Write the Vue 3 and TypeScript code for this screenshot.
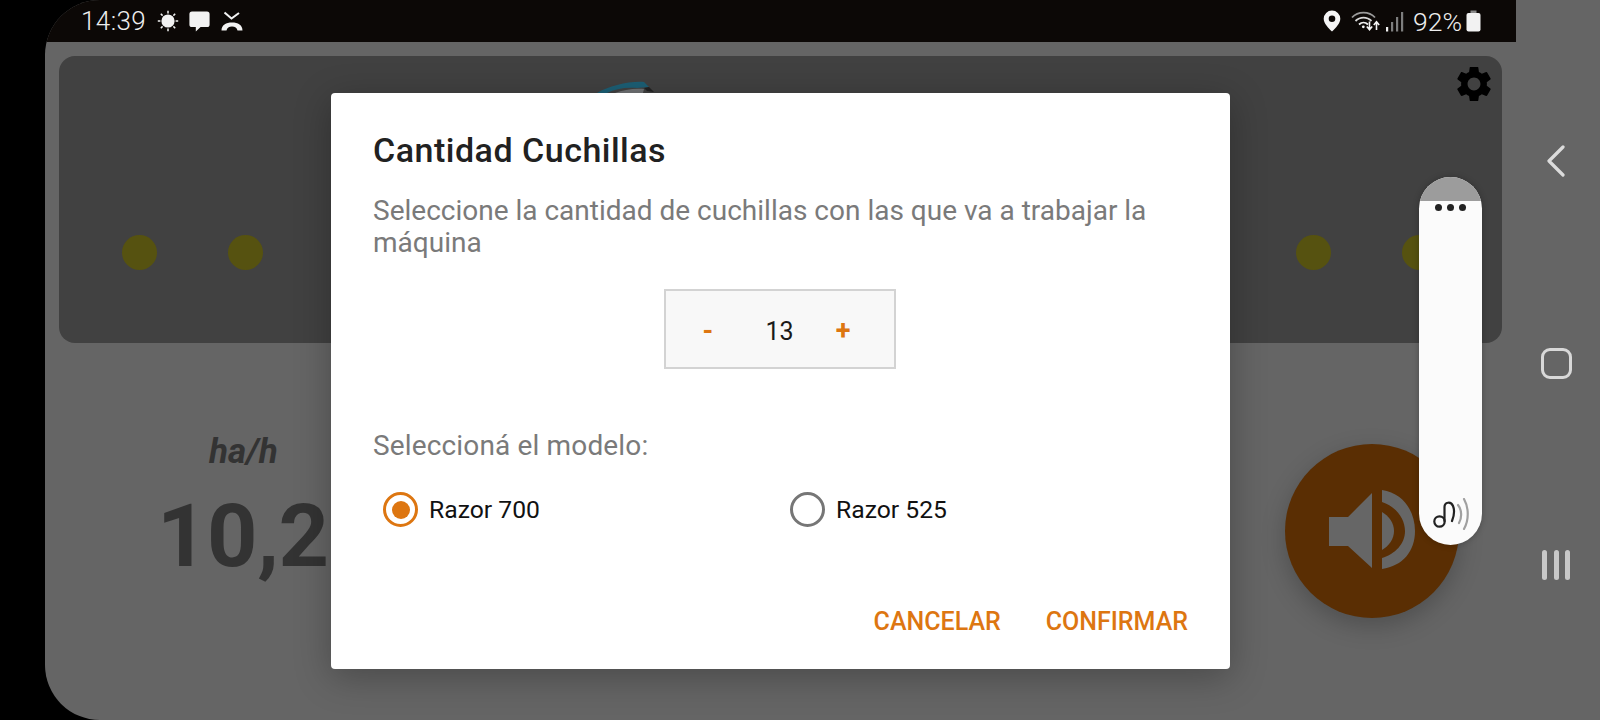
<script setup lang="ts">
const title: string = 'Cantidad Cuchillas'
const count: number = 13
const models: { name: string; checked: boolean }[] = [
  { name: 'Razor 700', checked: true },
  { name: 'Razor 525', checked: false },
]
</script>

<template>
  <div class="screen">
    <div class="phone">
      <div class="app">
        <header class="status">
          <div class="status-left">
            <span class="time">14:39</span>
            <svg class="ic-sun" width="22" height="22" viewBox="0 0 22 22">
              <circle cx="11" cy="11" r="6.6" fill="#f2f2f2" />
              <path d="M11 .8v2.6M11 18.6v2.6M.8 11h2.6M18.6 11h2.6M3.8 3.8l1.8 1.8M16.4 16.4l1.8 1.8M3.8 18.2l1.8-1.8M16.4 5.6l1.8-1.8" stroke="#f2f2f2" stroke-width="1.5" />
            </svg>
            <svg class="ic-msg" width="21" height="21" viewBox="0 0 21 21">
              <path d="M3 .6h15a2.6 2.6 0 0 1 2.6 2.6v10.2a2.6 2.6 0 0 1-2.6 2.6h-6.4l-4.8 4.4v-4.4H3A2.6 2.6 0 0 1 .4 13.4V3.2A2.6 2.6 0 0 1 3 .6z" fill="#f2f2f2" />
            </svg>
            <svg class="ic-call" width="22" height="20" viewBox="0 0 22 20">
              <path d="M3.500 1.500l7 6 7.500-5.500" fill="none" stroke="#f2f2f2" stroke-width="2.100" />
              <path d="M.5 19.500C.5 14 5 11.500 11 11.500s10.500 2.500 10.500 8h-5c-.5-2.600-2.500-4-5.500-4s-5 1.400-5.500 4z" fill="#f2f2f2" />
            </svg>
          </div>
          <div class="status-right">
            <svg class="ic-pin" width="18" height="22" viewBox="0 0 18 22">
              <path fill-rule="evenodd" d="M9 .5a8.300 8.300 0 0 1 8.300 8.300c0 4.400-4.700 9.600-8.300 12.700C5.400 18.400.7 13.200.7 8.800A8.300 8.300 0 0 1 9 .5zM9 5.500a3.300 3.300 0 1 0 0 6.600 3.300 3.300 0 0 0 0-6.600z" fill="#f5f5f5" />
            </svg>
            <svg class="ic-wifi" width="29" height="22" viewBox="0 0 29 22">
              <path d="M1 7.500C7 .9 18 .9 24 7.500" fill="none" stroke="#9a9a9a" stroke-width="1.800" />
              <path d="M4.500 11c4.500-4.600 11.500-4.600 16 0" fill="none" stroke="#d8d8d8" stroke-width="1.800" />
              <path d="M8 14.500c2.700-2.500 6.300-2.500 9 0" fill="none" stroke="#f0f0f0" stroke-width="1.800" />
              <circle cx="12.300" cy="16.800" r="1.400" fill="#f5f5f5" />
              <path d="M18.500 11.500v7.500M15.800 16.500l2.700 3.200 2.700-3.200M25.500 20v-7.500M22.800 15l2.700-3.200 2.700 3.200" fill="none" stroke="#f5f5f5" stroke-width="1.600" />
            </svg>
            <svg class="ic-signal" width="19" height="21" viewBox="0 0 19 21">
              <rect x="1" y="16" width="2.200" height="4.500" fill="#f0f0f0" />
              <rect x="6" y="11" width="2.200" height="9.500" fill="#7d7d7d" />
              <rect x="11" y="6" width="2.200" height="14.500" fill="#7d7d7d" />
              <rect x="16" y="1" width="2.200" height="19.500" fill="#7d7d7d" />
            </svg>
            <span class="pct">92%</span>
            <svg class="ic-batt" width="15" height="22" viewBox="0 0 15 22">
              <path d="M4.500.5h6v2.500h-6z" fill="#8a8a8a" />
              <rect x=".5" y="3" width="14" height="18.500" rx="2" fill="#f2f2f2" />
            </svg>
          </div>
        </header>

        <section class="panel">
          <svg class="gear" width="34" height="34" viewBox="2.500 2.500 19 19">
            <path d="M19.140 12.940c.04-.3.06-.61.06-.94 0-.32-.02-.64-.07-.94l2.030-1.580a.49.49 0 0 0 .12-.61l-1.920-3.320a.488.488 0 0 0-.59-.22l-2.390.96c-.5-.38-1.030-.7-1.620-.94l-.36-2.540a.484.484 0 0 0-.48-.41h-3.840c-.24 0-.43.17-.47.41l-.36 2.540c-.59.24-1.130.57-1.620.94l-2.390-.96c-.22-.08-.47 0-.59.22L2.740 8.870c-.12.21-.08.47.12.61l2.030 1.580c-.05.3-.09.63-.09.94s.02.64.07.94l-2.030 1.580a.49.49 0 0 0-.12.61l1.920 3.320c.12.22.37.29.59.22l2.390-.96c.5.38 1.030.7 1.620.94l.36 2.540c.05.24.24.41.48.41h3.840c.24 0 .44-.17.47-.41l.36-2.540c.59-.24 1.130-.56 1.620-.94l2.390.96c.22.08.47 0 .59-.22l1.920-3.320c.12-.22.07-.47-.12-.61l-2.010-1.580zM12 15.600c-1.980 0-3.600-1.620-3.600-3.600s1.620-3.600 3.600-3.600 3.600 1.620 3.600 3.600-1.620 3.600-3.600 3.600z" fill="#000" />
          </svg>
          <svg class="logo-arc" width="60" height="14" viewBox="0 0 60 14">
            <path d="M0 12C12 5 32 0 47 1l5 5-12 1C28 6 18 8 10 12z" fill="#1c5f75" />
            <path d="M18 12C26 9 37 7 47 8l-1 4z" fill="#6f7173" />
            <path d="M47 7l5-1 5 5-7-1z" fill="#222" />
          </svg>
          <div class="dots">
            <div class="dot-group"><i class="dot"></i><i class="dot"></i></div>
            <div class="dot-group"><i class="dot"></i><i class="dot"></i></div>
          </div>
        </section>

        <section class="lower">
          <div class="stat">
            <div class="stat-label">ha/h</div>
            <div class="stat-value">10,2</div>
          </div>
          <div class="sound">
            <svg width="174" height="174" viewBox="0 0 174 174">
              <path d="M44 73h19l24-24v75L63 102H44z" fill="#666" />
              <path d="M97 46c21 3 33 21 33 41s-12 35-33 38v-11c13-4 23-14 23-27s-10-25-23-29z" fill="#666" />
              <path d="M97 68c7 4 12 11 12 19s-5 15-12 19z" fill="#666" />
            </svg>
          </div>
        </section>
      </div>

      <nav class="nav">
        <div class="nav-cell">
          <svg width="20" height="32" viewBox="0 0 20 32">
            <path d="M17 2L3 16l14 14" fill="none" stroke="#dcdcdc" stroke-width="3.200" stroke-linecap="round" stroke-linejoin="round" />
          </svg>
        </div>
        <div class="nav-cell"><span class="nav-home"></span></div>
        <div class="nav-cell">
          <span class="nav-recent"><i></i><i></i><i></i></span>
        </div>
      </nav>
    </div>

    <div class="dialog">
      <h2 class="d-title">{{ title }}</h2>
      <p class="d-text">Seleccione la cantidad de cuchillas con las que va a trabajar la máquina</p>
      <div class="stepper-row">
        <div class="stepper">
          <span class="step minus">-</span>
          <span class="num">{{ count }}</span>
          <span class="step plus">+</span>
        </div>
      </div>
      <p class="d-label">Seleccioná el modelo:</p>
      <div class="radios">
        <div v-for="m in models" :key="m.name" class="radio" :class="{ on: m.checked }">
          <span class="ring"><span v-if="m.checked" class="core"></span></span>
          <span class="radio-text">{{ m.name }}</span>
        </div>
      </div>
      <div class="actions">
        <span class="action">CANCELAR</span>
        <span class="action">CONFIRMAR</span>
      </div>
    </div>

    <aside class="volume">
      <div class="vol-head"></div>
      <div class="vol-dots"><i></i><i></i><i></i></div>
      <svg class="vol-icon" width="42" height="32" viewBox="0 0 42 32">
        <circle cx="8.500" cy="23.500" r="5.200" fill="none" stroke="#222" stroke-width="2.200" />
        <path d="M13.500 23V9c0-5 6.500-6 8.500-1 2 5 1 10-1 15" fill="none" stroke="#222" stroke-width="2.200" stroke-linecap="round" />
        <path d="M27 7c4 5 4 13 1 18M33 1c5 9 5 21 0 30" fill="none" stroke="#a0a0a0" stroke-width="2.200" stroke-linecap="round" />
      </svg>
    </aside>
  </div>
</template>

<style>
html, body { margin: 0; background: #000; }
</style>

<style scoped>
.screen {
  position: relative;
  width: 1600px;
  height: 720px;
  overflow: hidden;
  background: #000;
  display: flex;
  font-family: Roboto, "Liberation Sans", sans-serif;
}
.phone {
  margin-left: 45px;
  flex: 1;
  display: flex;
  overflow: hidden;
  background: #656565;
  border-radius: 55px 0 0 55px;
}
.app { width: 1471px; display: flex; flex-direction: column; }
.status {
  height: 42px;
  flex: none;
  background: #0c0806;
  display: flex;
  justify-content: space-between;
  align-items: center;
  color: #eee;
  padding: 0 35px 0 36px;
}
.status-left, .status-right { display: flex; align-items: center; }
.time { font-size: 26px; font-weight: 300; letter-spacing: .4px; margin-right: 11px; }
.ic-msg { margin-left: 10px; }
.ic-call { margin-left: 11px; }
.ic-wifi { margin-left: 10px; }
.ic-signal { margin-left: 5px; }
.pct { font-size: 26.500px; font-weight: 300; margin-left: 9px; margin-right: 4px; }

.panel {
  position: relative;
  margin: 14px 14px 0;
  height: 287px;
  flex: none;
  box-sizing: border-box;
  padding: 11px 65px 0 63px;
  background: #414141;
  border-radius: 16px;
  display: flex;
  flex-direction: column;
}
.gear { align-self: flex-end; margin-right: -54px; }
.logo-arc { position: absolute; left: 538px; top: 25px; }
.dots { display: flex; justify-content: space-between; margin-top: 134px; }
.dot-group { display: flex; gap: 71px; }
.dot { width: 35px; height: 35px; border-radius: 50%; background: #565210; display: block; }

.lower {
  flex: 1;
  display: flex;
  justify-content: space-between;
  align-items: flex-start;
  padding: 0 57px 0 114px;
}
.stat { margin-top: 89px; color: #333; width: 200px; }
.stat-label {
  font-size: 35px;
  font-weight: 700;
  font-style: italic;
  line-height: 40px;
  margin-left: 50px;
}
.stat-value {
  font-size: 88px;
  font-weight: 700;
  line-height: 90px;
  letter-spacing: -.4px;
  margin-top: 19px;
  margin-left: -2px;
  white-space: nowrap;
}
.sound {
  margin-top: 101px;
  width: 174px;
  height: 174px;
  border-radius: 50%;
  background: #5a2e03;
  box-shadow: 0 8px 24px rgba(0, 0, 0, .22);
}
.sound svg { display: block; }

.nav { flex: 1; padding: 60px 4px 0 0; display: flex; flex-direction: column; }
.nav-cell { height: 202px; flex: none; display: flex; align-items: center; justify-content: center; }
.nav-home {
  width: 25px;
  height: 25px;
  border: 3.500px solid #d8d8d8;
  border-radius: 9px;
  display: block;
}
.nav-recent { display: flex; gap: 6.500px; }
.nav-recent i { width: 5px; height: 30px; border-radius: 2.500px; background: #c8c8c8; display: block; }

.dialog {
  position: absolute;
  left: 331px;
  top: 93px;
  width: 899px;
  height: 576px;
  box-sizing: border-box;
  padding: 36px 42px 0;
  background: #fff;
  border-radius: 4px;
  box-shadow: 0 8px 36px rgba(0, 0, 0, .28);
  display: flex;
  flex-direction: column;
}
.d-title {
  margin: 0;
  font-size: 34px;
  font-weight: 500;
  line-height: 42px;
  letter-spacing: .5px;
  color: #212121;
}
.d-text {
  margin: 24px 0 0;
  font-size: 28px;
  line-height: 32px;
  color: #7a7a7a;
  max-width: 800px;
}
.stepper-row { display: flex; justify-content: center; margin-top: 30px; padding-right: 2px; }
.stepper {
  width: 232px;
  height: 80px;
  box-sizing: border-box;
  border: 2px solid #d3d3d3;
  background: #f8f8f8;
  display: flex;
  align-items: center;
  justify-content: space-between;
  padding: 4px 43px 0 37px;
  font-size: 25px;
  color: #1a1a1a;
}
.num { margin-left: 10px; }
.step { color: #dd7611; font-weight: 700; font-size: 27px; }
.d-label {
  margin: 61px 0 0;
  font-size: 28px;
  line-height: 32px;
  letter-spacing: .15px;
  color: #7a7a7a;
}
.radios { display: flex; margin-top: 30px; padding-left: 10px; }
.radio { width: 407px; flex: none; display: flex; align-items: center; gap: 11px; }
.ring {
  width: 35px;
  height: 35px;
  box-sizing: border-box;
  border: 3.500px solid #767676;
  border-radius: 50%;
  display: flex;
  align-items: center;
  justify-content: center;
}
.radio.on .ring { border-color: #dd7611; }
.core { width: 18px; height: 18px; border-radius: 50%; background: #dd7611; }
.radio-text { font-size: 24.700px; line-height: 34px; color: #111; }
.actions { margin-top: auto; margin-bottom: 33px; display: flex; justify-content: flex-end; gap: 45px; }
.action { font-size: 25px; font-weight: 500; color: #dd7611; line-height: 28px; }

.volume {
  position: absolute;
  left: 1419px;
  top: 177px;
  width: 63px;
  height: 368px;
  background: #fbfbfb;
  border-radius: 32px;
  overflow: hidden;
  box-shadow: 0 0 6px rgba(0, 0, 0, .25);
  display: flex;
  flex-direction: column;
  align-items: center;
}
.vol-head { width: 100%; height: 24px; background: #9c9c9c; flex: none; }
.vol-dots { display: flex; gap: 5px; margin-top: 2.500px; }
.vol-dots i { width: 7px; height: 7px; border-radius: 50%; background: #222; display: block; }
.vol-icon { margin-top: auto; margin-bottom: 15px; margin-left: 2px; }
</style>
